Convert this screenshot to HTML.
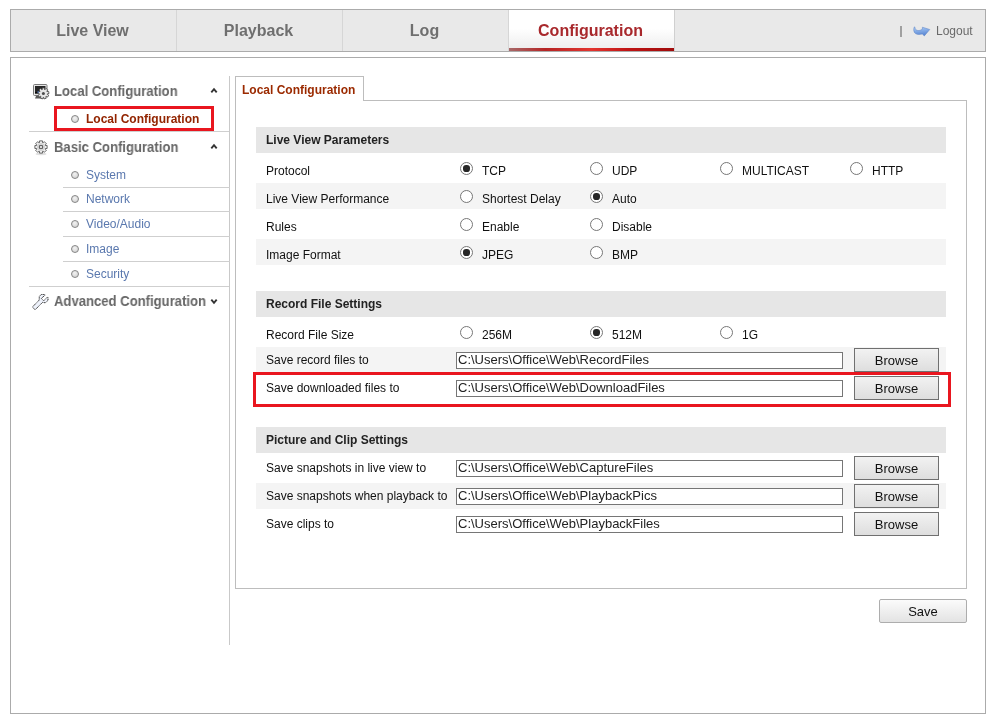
<!DOCTYPE html>
<html><head><meta charset="utf-8">
<style>
*{box-sizing:border-box}
html,body{margin:0;padding:0;background:#fff;width:1006px;height:721px;overflow:hidden;font-family:"Liberation Sans",sans-serif}
.abs{position:absolute}
body>*{will-change:transform}
#hdr{position:absolute;left:10px;top:9px;width:976px;height:43px;border:1px solid #ababab;background:#e9e9e9}
.tab{position:absolute;top:0;height:41px;width:166px;text-align:center;font:bold 16px/41px "Liberation Sans",sans-serif;color:#6f6f6f;border-right:1px solid #d6d6d6;padding-right:2px}
.tab.sel{background:linear-gradient(#fff,#fff 45%,#ececec);color:#a8282c;border-right:1px solid #d0d0d0}
.tab.sel .bar{position:absolute;left:0;right:0;bottom:0;height:3px;background:linear-gradient(90deg,#a86a6a,#b62525 22%,#e3352f 50%,#c01515 72%,#a00c0c)}
#logout{position:absolute;right:13px;top:0;height:41px;font:12px/41px "Liberation Sans",sans-serif;color:#6a6a6a}
#box{position:absolute;left:10px;top:57px;width:976px;height:657px;border:1px solid #ababab;background:#fff}
#vdiv{position:absolute;left:229px;top:76px;width:1px;height:569px;background:#c9c9c9}
.mh{position:absolute;font:bold 14px "Liberation Sans",sans-serif;color:#666;transform:scaleX(0.935);transform-origin:0 0;margin-left:-0.6px;margin-top:-1px}
.caret{position:absolute;font:bold 11px "Liberation Sans",sans-serif;color:#555}
.mi{position:absolute;font:12px "Liberation Sans",sans-serif;color:#5a78ae}
.dot{position:absolute;width:8.4px;height:8.4px;border-radius:50%;border:1px solid #858585;background:radial-gradient(circle at 45% 35%,#f2f2f2,#cdcdcd)}
.hl{position:absolute;height:1px;background:#cfcfcf}
#panel{position:absolute;left:235px;top:100px;width:732px;height:489px;border:1px solid #bdbdbd}
#ptab{position:absolute;left:235px;top:76px;width:129px;height:25px;border:1px solid #bdbdbd;border-bottom:none;background:#fff;font:bold 12px "Liberation Sans",sans-serif;color:#9b2a00;padding:6px 0 0 6px}
.sh{position:absolute;left:256px;width:690px;height:26px;background:#e6e6e6;font:bold 12px/26px "Liberation Sans",sans-serif;color:#222;padding-left:10px}
.row{position:absolute;left:256px;width:690px;height:26px}
.row.alt{background:#f4f4f4}
.lbl{position:absolute;left:10px;font:12px "Liberation Sans",sans-serif;color:#111;white-space:nowrap}
.rad{position:absolute;width:13px;height:13px;border-radius:50%;border:1px solid #767676;background:#fff}
.rad.on::after{content:"";position:absolute;left:2.4px;top:2.4px;width:6.2px;height:6.2px;border-radius:50%;background:#262626}
.rt{position:absolute;font:12px "Liberation Sans",sans-serif;color:#111;white-space:nowrap}
.inp{position:absolute;left:200px;width:387px;height:17px;border:1px solid #767676;background:#fff;font:13px/13px "Liberation Sans",sans-serif;color:#222;padding-left:1px;white-space:nowrap;overflow:hidden}
.btn{position:absolute;left:598px;width:85px;height:24px;border:1px solid #707070;background:linear-gradient(#f2f2f2,#dedede);font:13px/23px "Liberation Sans",sans-serif;color:#111;text-align:center}
.redbox{position:absolute;border:3px solid #e9161f}
#save{position:absolute;left:879px;top:599px;width:88px;height:24px;border:1px solid #adadad;border-radius:2px;background:linear-gradient(#fbfbfb,#e3e3e3);font:13px/23px "Liberation Sans",sans-serif;color:#111;text-align:center}
</style></head><body>

<div id="hdr">
  <div class="tab" style="left:0">Live View</div>
  <div class="tab" style="left:166px">Playback</div>
  <div class="tab" style="left:332px">Log</div>
  <div class="tab sel" style="left:498px">Configuration<div class="bar"></div></div>
  <div style="position:absolute;left:889px;top:16px;width:2px;height:11px;background:#a0a0a0"></div>
  <svg style="position:absolute;left:902px;top:16px" width="18" height="11" viewBox="0 0 18 11">
    <defs><linearGradient id="lg" x1="0.3" y1="0" x2="0.5" y2="1"><stop offset="0" stop-color="#a8cbf8"/><stop offset="1" stop-color="#5582d0"/></linearGradient></defs>
    <path d="M1.3,0.9 C0.3,3 0.5,6.3 2.5,7.6 C4.5,8.9 7,8.6 9.3,8 L11.3,9.9 L16.8,3.5 L9.4,1.2 L9.3,3.3 C7.5,4.3 5.5,4.9 3.8,4.3 C2.6,3.7 2,2.6 1.8,0.9 Z" fill="url(#lg)" stroke="#5b80c2" stroke-width="0.5" stroke-linejoin="round"/>
  </svg>
  <div style="position:absolute;left:925px;top:14px;font:12px 'Liberation Sans',sans-serif;color:#6a6a6a">Logout</div>
</div>

<div id="box"></div>
<div id="vdiv"></div>

<!-- left menu -->
<svg class="abs" style="left:33px;top:84px" width="17" height="16" viewBox="0 0 17 16">
  <rect x="0.5" y="0.5" width="13.5" height="11" rx="1" fill="#e6e6e6" stroke="#7a7a7a"/>
  <rect x="2" y="2" width="10.5" height="7.5" fill="#262626"/>
  <rect x="2" y="8" width="5" height="1.5" fill="#0a0a0a"/>
  <path d="M3,12 L11,12 L12,14.5 L2,14.5 Z" fill="#5a5a5a"/>
  <g transform="translate(10.4,9.4)">
    <path d="M-1.17,-3.83 L-1.07,-5.50 L1.07,-5.50 L1.17,-3.83 L1.56,-3.68 L2.71,-4.90 L4.35,-3.52 L3.35,-2.18 L3.56,-1.82 L5.23,-2.01 L5.60,0.10 L3.97,0.49 L3.90,0.90 L5.29,1.82 L4.23,3.67 L2.73,2.93 L2.41,3.19 L2.88,4.80 L0.88,5.53 L0.21,3.99 L-0.21,3.99 L-0.88,5.53 L-2.88,4.80 L-2.41,3.19 L-2.73,2.93 L-4.23,3.67 L-5.29,1.82 L-3.90,0.90 L-3.97,0.49 L-5.60,0.10 L-5.23,-2.01 L-3.56,-1.82 L-3.35,-2.18 L-4.35,-3.52 L-2.71,-4.90 L-1.56,-3.68 Z" fill="#e6e6e6" stroke="#505050" stroke-width="0.9" stroke-linejoin="round"/>
    <circle r="1.5" fill="#4a4a4a"/>
  </g>
  <rect x="4.5" y="7.2" width="1.3" height="1.6" fill="#3b62a8"/>
</svg>
<svg class="abs" style="left:33px;top:139px" width="16" height="17" viewBox="0 0 16 17">
  <ellipse cx="8" cy="15" rx="5.5" ry="1.2" fill="#000" opacity="0.12"/>
  <g transform="translate(8,8)">
    <path d="M-1.50,-4.35 L-1.52,-6.11 L1.52,-6.11 L1.50,-4.35 L2.02,-4.13 L3.24,-5.40 L5.40,-3.24 L4.13,-2.02 L4.35,-1.50 L6.11,-1.52 L6.11,1.52 L4.35,1.50 L4.13,2.02 L5.40,3.24 L3.24,5.40 L2.02,4.13 L1.50,4.35 L1.52,6.11 L-1.52,6.11 L-1.50,4.35 L-2.02,4.13 L-3.24,5.40 L-5.40,3.24 L-4.13,2.02 L-4.35,1.50 L-6.11,1.52 L-6.11,-1.52 L-4.35,-1.50 L-4.13,-2.02 L-5.40,-3.24 L-3.24,-5.40 L-2.02,-4.13 Z" fill="#efefef" stroke="#666" stroke-width="1" stroke-linejoin="round"/>
    <circle r="3.4" fill="none" stroke="#d2d2d2" stroke-width="1.3"/>
    <circle r="1.8" fill="#dadada" stroke="#555" stroke-width="1.1"/>
  </g>
</svg>
<svg class="abs" style="left:32px;top:294px" width="17" height="17" viewBox="0 0 17 17">
  <path d="M9.3,0.4 L12.7,0.4 L12.9,1.3 L9.3,4.4 L11.7,6.8 L15,3.4 L16,3.4 L16,6.4 L13.3,8.8 L10.5,8.4 L3.1,15.8 L0.4,13 L7.2,6.1 L7.3,2.4 Z" fill="#eef2fb" stroke="#2c2c2c" stroke-width="1" stroke-dasharray="1.2 0.6" stroke-linejoin="round"/>
</svg>

<div class="mh" style="left:55px;top:84px">Local Configuration</div>
<svg class="abs" style="left:210px;top:87px" width="8" height="7" viewBox="0 0 8 7"><path d="M1.3,5.3 L4,2.2 L6.7,5.3" fill="none" stroke="#333" stroke-width="1.9"/></svg>
<div class="dot" style="left:71.2px;top:114.7px"></div>
<div class="mi" style="left:86px;top:112px;font-weight:bold;color:#922400">Local Configuration</div>
<div class="redbox" style="left:54px;top:106px;width:160px;height:25px"></div>
<div class="hl" style="left:29px;top:131px;width:200px"></div>

<div class="mh" style="left:55px;top:140px">Basic Configuration</div>
<svg class="abs" style="left:210px;top:143px" width="8" height="7" viewBox="0 0 8 7"><path d="M1.3,5.3 L4,2.2 L6.7,5.3" fill="none" stroke="#333" stroke-width="1.9"/></svg>
<div class="dot" style="left:71.2px;top:170.8px"></div><div class="mi" style="left:86px;top:168px">System</div>
<div class="hl" style="left:63px;top:187px;width:167px"></div>
<div class="dot" style="left:71.2px;top:194.8px"></div><div class="mi" style="left:86px;top:192px">Network</div>
<div class="hl" style="left:63px;top:211px;width:167px"></div>
<div class="dot" style="left:71.2px;top:219.8px"></div><div class="mi" style="left:86px;top:217px">Video/Audio</div>
<div class="hl" style="left:63px;top:236px;width:167px"></div>
<div class="dot" style="left:71.2px;top:244.9px"></div><div class="mi" style="left:86px;top:242px">Image</div>
<div class="hl" style="left:63px;top:261px;width:167px"></div>
<div class="dot" style="left:71.2px;top:269.9px"></div><div class="mi" style="left:86px;top:267px">Security</div>
<div class="hl" style="left:29px;top:286px;width:200px"></div>

<div class="mh" style="left:55px;top:294px">Advanced Configuration</div>
<svg class="abs" style="left:210px;top:298px" width="8" height="7" viewBox="0 0 8 7"><path d="M1.3,1.7 L4,4.8 L6.7,1.7" fill="none" stroke="#333" stroke-width="1.9"/></svg>

<!-- panel -->
<div id="panel"></div>
<div id="ptab">Local Configuration</div>

<div class="sh" style="top:127px">Live View Parameters</div>
<div class="row" style="top:155px"><div class="lbl" style="top:9px">Protocol</div><div class="rad on" style="left:204px;top:7px"></div><div class="rt" style="left:226px;top:9px">TCP</div><div class="rad" style="left:334px;top:7px"></div><div class="rt" style="left:356px;top:9px">UDP</div><div class="rad" style="left:464px;top:7px"></div><div class="rt" style="left:486px;top:9px">MULTICAST</div><div class="rad" style="left:594px;top:7px"></div><div class="rt" style="left:616px;top:9px">HTTP</div></div>
<div class="row alt" style="top:183px"><div class="lbl" style="top:9px">Live View Performance</div><div class="rad" style="left:204px;top:7px"></div><div class="rt" style="left:226px;top:9px">Shortest Delay</div><div class="rad on" style="left:334px;top:7px"></div><div class="rt" style="left:356px;top:9px">Auto</div></div>
<div class="row" style="top:211px"><div class="lbl" style="top:9px">Rules</div><div class="rad" style="left:204px;top:7px"></div><div class="rt" style="left:226px;top:9px">Enable</div><div class="rad" style="left:334px;top:7px"></div><div class="rt" style="left:356px;top:9px">Disable</div></div>
<div class="row alt" style="top:239px"><div class="lbl" style="top:9px">Image Format</div><div class="rad on" style="left:204px;top:7px"></div><div class="rt" style="left:226px;top:9px">JPEG</div><div class="rad" style="left:334px;top:7px"></div><div class="rt" style="left:356px;top:9px">BMP</div></div>

<div class="sh" style="top:291px">Record File Settings</div>
<div class="row" style="top:319px"><div class="lbl" style="top:9px">Record File Size</div><div class="rad" style="left:204px;top:7px"></div><div class="rt" style="left:226px;top:9px">256M</div><div class="rad on" style="left:334px;top:7px"></div><div class="rt" style="left:356px;top:9px">512M</div><div class="rad" style="left:464px;top:7px"></div><div class="rt" style="left:486px;top:9px">1G</div></div>
<div class="row alt" style="top:347px"><div class="lbl" style="top:6px">Save record files to</div>
  <div class="inp" style="top:5px">C:\Users\Office\Web\RecordFiles</div><div class="btn" style="top:1px">Browse</div></div>
<div class="row" style="top:375px"><div class="lbl" style="top:6px">Save downloaded files to</div>
  <div class="inp" style="top:5px">C:\Users\Office\Web\DownloadFiles</div><div class="btn" style="top:1px">Browse</div></div>
<div class="redbox" style="left:253px;top:372px;width:698px;height:35px"></div>

<div class="sh" style="top:427px">Picture and Clip Settings</div>
<div class="row" style="top:455px"><div class="lbl" style="top:6px">Save snapshots in live view to</div>
  <div class="inp" style="top:5px">C:\Users\Office\Web\CaptureFiles</div><div class="btn" style="top:1px">Browse</div></div>
<div class="row alt" style="top:483px"><div class="lbl" style="top:6px">Save snapshots when playback to</div>
  <div class="inp" style="top:5px">C:\Users\Office\Web\PlaybackPics</div><div class="btn" style="top:1px">Browse</div></div>
<div class="row" style="top:511px"><div class="lbl" style="top:6px">Save clips to</div>
  <div class="inp" style="top:5px">C:\Users\Office\Web\PlaybackFiles</div><div class="btn" style="top:1px">Browse</div></div>

<div id="save">Save</div>
</body></html>
